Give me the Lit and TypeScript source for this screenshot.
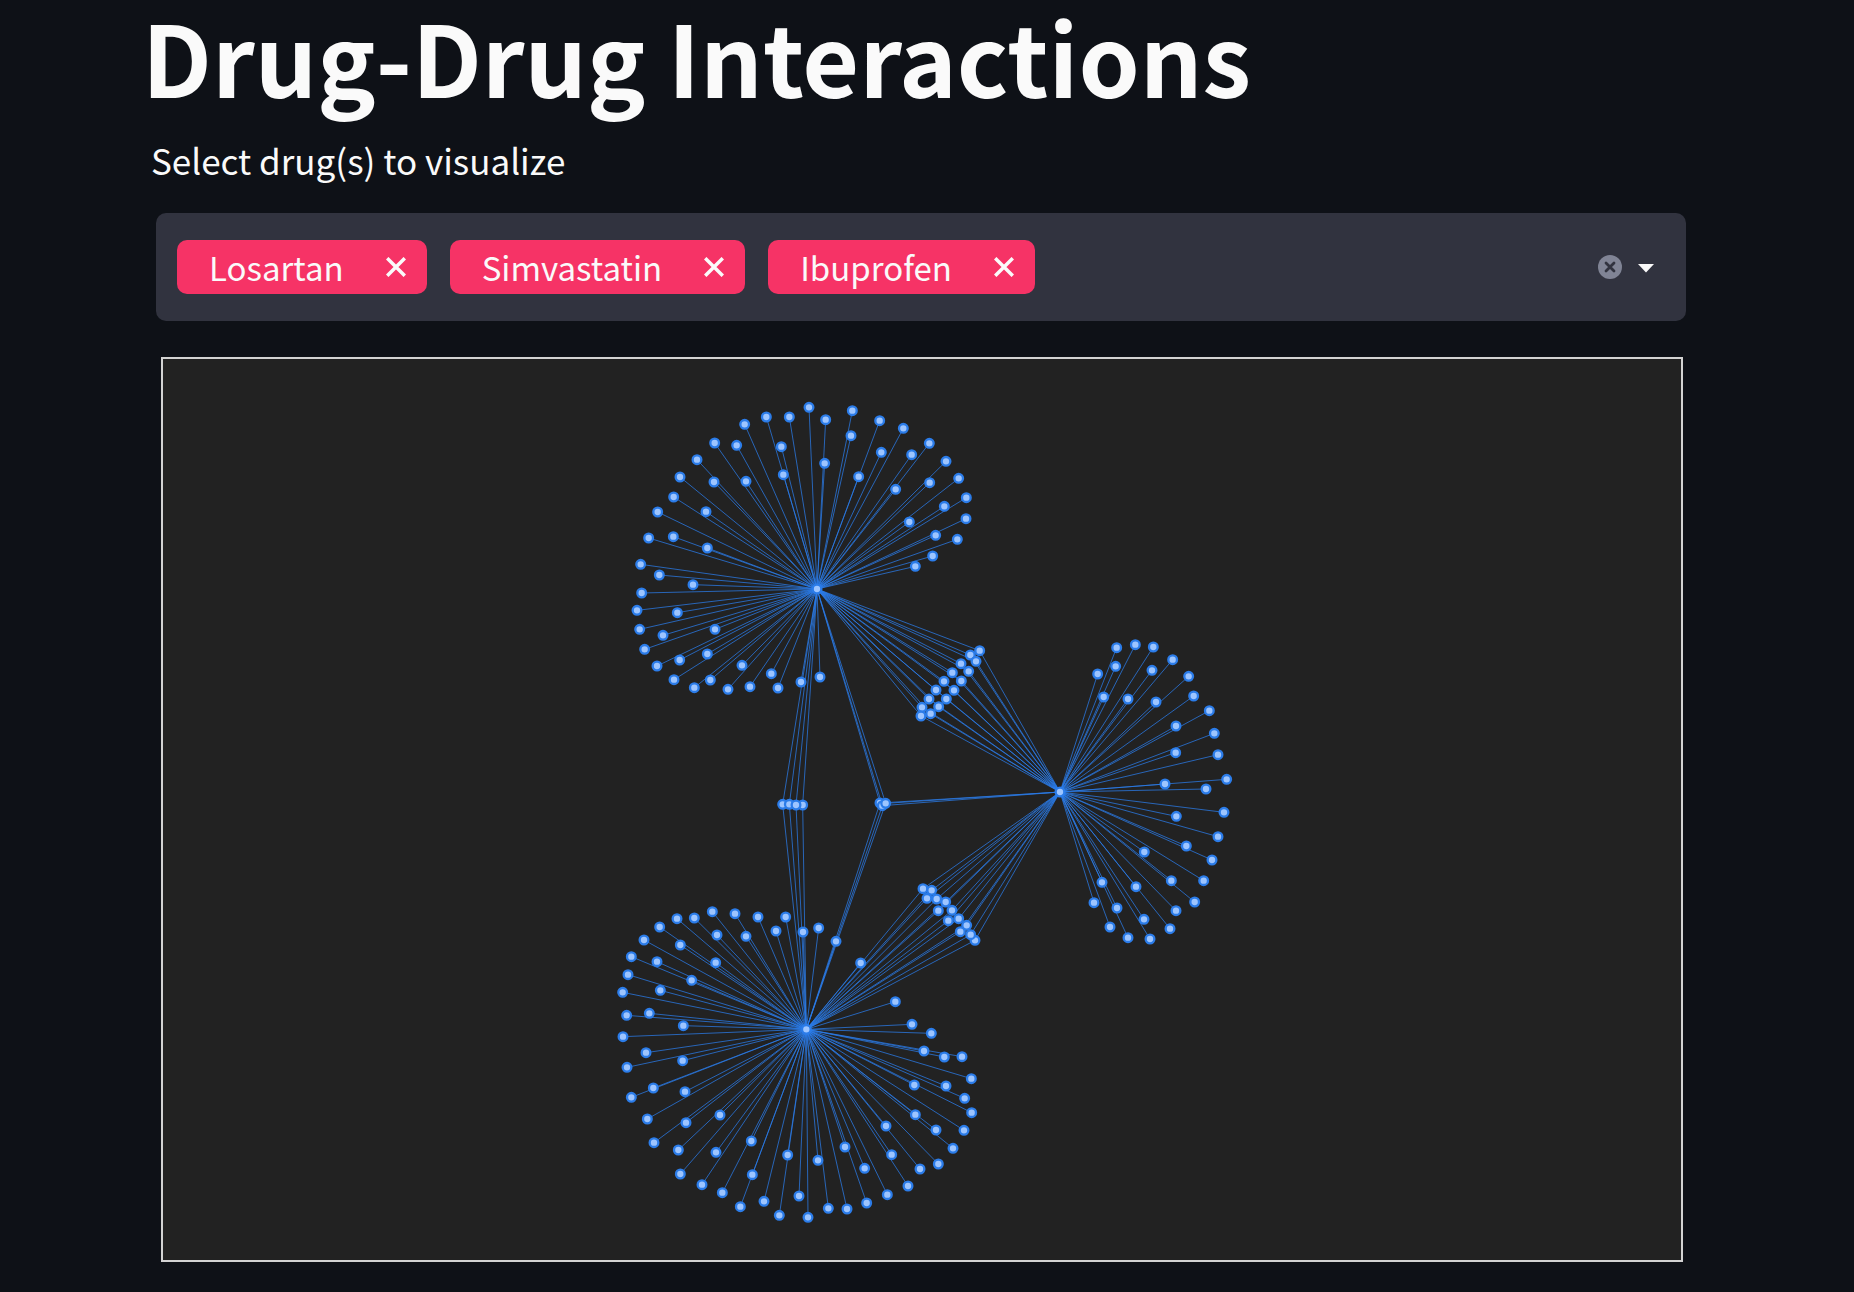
import { LitElement, html, svg, css } from "lit";
import { customElement, property, state } from "lit/decorators.js";

type Point = [number, number];

interface Cluster {
  hubs: string[];
  origin: Point;
  nodes: Point[];
}

const VIEW_WIDTH = 4554;
const VIEW_HEIGHT = 2703;

const HUBS: Record<string, Point> = {
  Losartan: [1962, 690],
  Simvastatin: [1930, 2011],
  Ibuprofen: [2691, 1299],
};

/* Interaction partners, grouped by the selected drugs they are linked to. */
const CLUSTERS: Cluster[] = [
  {
    hubs: ["Losartan"],
    origin: [1371, 93],
    nodes: [
      [567, 52], [439, 81], [508, 81], [374, 103], [284, 159], [350, 166], [484, 170],
      [231, 209], [490, 254], [180, 261], [282, 276], [378, 274], [161, 321], [258, 365],
      [113, 366], [86, 444], [160, 440], [262, 474], [62, 523], [118, 555], [219, 584],
      [65, 609], [51, 661], [172, 668], [59, 718], [129, 736], [285, 718], [74, 778],
      [262, 792], [179, 810], [111, 828], [366, 826], [162, 869], [271, 870], [454, 851],
      [223, 893], [324, 898], [390, 890], [474, 894], [543, 876], [600, 861],
    ],
  },
  {
    hubs: ["Losartan"],
    origin: [1911, 93],
    nodes: [
      [77, 89], [157, 62], [153, 137], [239, 92], [310, 115], [388, 160], [74, 220],
      [244, 187], [335, 194], [438, 214], [176, 260], [287, 298], [389, 278], [476, 265],
      [499, 323], [433, 349], [328, 396], [498, 386], [407, 436], [472, 448], [398, 498],
      [346, 529],
    ],
  },
  {
    hubs: ["Losartan", "Ibuprofen"],
    origin: [1821, 813],
    nodes: [
      [601, 75], [629, 62], [573, 101], [618, 94], [547, 128], [596, 124], [522, 154],
      [574, 153], [498, 180], [552, 181], [477, 207], [529, 207], [456, 232], [506, 230],
      [482, 251], [453, 258],
    ],
  },
  {
    hubs: ["Losartan", "Simvastatin"],
    origin: [1821, 813],
    nodes: [[98, 525], [38, 523], [58, 523], [78, 525]],
  },
  {
    hubs: ["Losartan", "Simvastatin", "Ibuprofen"],
    origin: [1821, 813],
    nodes: [[330, 519], [337, 527], [347, 520]],
  },
  {
    hubs: ["Simvastatin", "Ibuprofen"],
    origin: [1821, 813],
    nodes: [
      [459, 776], [485, 781], [471, 805], [500, 807], [527, 816], [505, 842], [546, 841],
      [535, 872], [566, 866], [590, 886], [571, 905], [615, 931], [602, 914],
    ],
  },
  {
    hubs: ["Simvastatin"],
    origin: [1821, 813],
    nodes: [[198, 934], [272, 999], [146, 894], [99, 906]],
  },
  {
    hubs: ["Ibuprofen"],
    origin: [2631, 813],
    nodes: [
      [230, 53], [286, 44], [340, 51], [398, 89], [173, 132], [227, 109], [336, 121],
      [446, 139], [191, 201], [264, 207], [348, 216], [461, 198], [508, 242], [408, 288],
      [523, 310], [407, 368], [534, 374], [560, 448], [375, 462], [498, 477], [552, 547],
      [409, 559], [534, 620], [439, 648], [313, 666], [516, 690], [186, 757], [288, 770],
      [394, 752], [491, 752], [162, 818], [231, 834], [464, 816], [408, 842], [312, 868],
      [210, 891], [264, 923], [330, 927], [390, 896],
    ],
  },
  {
    hubs: ["Simvastatin"],
    origin: [1341, 1593],
    nodes: [
      [307, 65], [375, 71], [444, 81], [527, 81], [253, 84], [201, 86], [149, 111],
      [102, 150], [321, 135], [408, 139], [498, 123], [211, 165], [64, 200], [141, 215],
      [317, 218], [54, 254], [245, 271], [38, 307], [151, 301], [50, 376], [118, 370],
      [220, 407], [39, 440], [108, 488], [218, 512], [51, 532], [130, 594], [225, 605],
      [64, 622], [112, 687], [228, 698], [330, 675], [132, 758], [205, 780], [318, 787],
      [424, 753], [211, 852], [276, 884], [427, 854], [533, 795], [337, 908], [391, 950],
      [462, 934], [567, 918], [508, 976], [594, 982],
    ],
  },
  {
    hubs: ["Simvastatin"],
    origin: [1911, 1593],
    nodes: [
      [286, 335], [336, 403], [394, 430], [372, 483], [433, 501], [486, 500], [514, 566],
      [343, 585], [438, 588], [494, 625], [515, 668], [346, 674], [258, 708], [408, 720],
      [492, 721], [459, 775], [135, 771], [275, 794], [54, 811], [194, 835], [415, 822],
      [360, 837], [324, 888], [262, 914], [200, 939], [85, 955], [141, 957],
    ],
  },
];

@customElement("interaction-graph")
class InteractionGraph extends LitElement {
  @property({ attribute: false }) drugs: string[] = [];

  static styles = css`
    :host {
      display: block;
      background: #222222;
      border: 2px solid #d3d3d3;
    }
    .canvas {
      display: block;
      width: 100%;
      height: auto;
    }
    .edge {
      stroke: #2b7ce9;
      stroke-width: 3;
      stroke-opacity: 0.75;
    }
    .node {
      fill: #9dc5ff;
      stroke: #2b7ce9;
      stroke-width: 7;
    }
  `;

  render() {
    const edges: [Point, Point][] = [];
    const nodes: Point[] = [];
    for (const cluster of CLUSTERS) {
      const linked = cluster.hubs.filter((hub) => this.drugs.includes(hub));
      if (!linked.length) continue;
      for (const [x, y] of cluster.nodes) {
        const node: Point = [cluster.origin[0] + x, cluster.origin[1] + y];
        nodes.push(node);
        for (const hub of linked) edges.push([HUBS[hub], node]);
      }
    }
    for (const drug of this.drugs) nodes.push(HUBS[drug]);

    return html`
      <svg class="canvas" viewBox="0 0 ${VIEW_WIDTH} ${VIEW_HEIGHT}" role="img" aria-label="Interaction graph">
        ${edges.map(
          ([a, b]) => svg`<line class="edge" x1=${a[0]} y1=${a[1]} x2=${b[0]} y2=${b[1]}></line>`,
        )}
        ${nodes.map(([x, y]) => svg`<circle class="node" cx=${x} cy=${y} r="13"></circle>`)}
      </svg>
    `;
  }
}

@customElement("drug-select")
class DrugSelect extends LitElement {
  @property({ attribute: false }) drugs: string[] = [];

  static styles = css`
    :host {
      display: block;
    }
    .label {
      display: block;
      margin: 0 0 31px 9px;
      font-size: 35px;
      line-height: 44px;
    }
    .field {
      display: flex;
      align-items: center;
      gap: 16px;
      min-height: 108px;
      box-sizing: border-box;
      margin-left: 14px;
      padding: 20px 32px 20px 21px;
      border-radius: 10px;
      background: #31333f;
    }
    .tags {
      display: flex;
      flex: 1;
      flex-wrap: wrap;
      gap: 23px;
      min-width: 0;
    }
    .tag {
      display: flex;
      align-items: center;
      gap: 42px;
      height: 54px;
      padding: 0 21px 0 32px;
      border-radius: 10px;
      background: #f63366;
      font-size: 33px;
      line-height: 52px;
    }
    .search {
      flex: 1;
      min-width: 40px;
      height: 54px;
      padding: 0;
      border: 0;
      outline: 0;
      background: transparent;
      color: inherit;
      font: inherit;
      font-size: 33px;
    }
    button {
      display: flex;
      padding: 0;
      border: 0;
      background: none;
      color: inherit;
      cursor: pointer;
    }
    svg {
      display: block;
    }
  `;

  private changeDrugs(drugs: string[]) {
    this.dispatchEvent(new CustomEvent("drugs-change", { detail: drugs }));
  }

  render() {
    return html`
      <label class="label" for="search">Select drug(s) to visualize</label>
      <div class="field">
        <div class="tags">
          ${this.drugs.map(
            (drug) => html`
              <span class="tag">
                ${drug}
                <button
                  type="button"
                  aria-label="Remove ${drug}"
                  @click=${() => this.changeDrugs(this.drugs.filter((d) => d !== drug))}
                >
                  <svg width="20" height="20" viewBox="0 0 20 20">
                    <path d="M1.200 1.200L18.800 18.800M18.800 1.200L1.200 18.800" stroke="currentColor" stroke-width="3.500" />
                  </svg>
                </button>
              </span>
            `,
          )}
          <input class="search" id="search" type="text" autocomplete="off" />
        </div>
        <button type="button" aria-label="Clear all" @click=${() => this.changeDrugs([])}>
          <svg width="24" height="24" viewBox="0 0 24 24">
            <circle cx="12" cy="12" r="12" fill="#808495" />
            <path d="M8 8L16 16M16 8L8 16" stroke="#31333f" stroke-width="2.800" stroke-linecap="round" />
          </svg>
        </button>
        <button type="button" aria-label="Open">
          <svg width="16" height="24" viewBox="0 0 16 24">
            <path d="M0 9H16L8 17.500Z" fill="#fafafa" />
          </svg>
        </button>
      </div>
    `;
  }
}

@customElement("app-root")
class AppRoot extends LitElement {
  @state() private drugs = ["Losartan", "Simvastatin", "Ibuprofen"];

  static styles = css`
    :host {
      display: block;
      box-sizing: border-box;
      min-height: 100vh;
      padding: 0 168px 28px 142px;
      background: #0e1117;
      color: #fafafa;
      font-family: "Noto Sans CJK SC", "Open Sans", sans-serif;
    }
    .title {
      margin: 0 0 28px;
      font-size: 98px;
      font-weight: 700;
      line-height: 110px;
    }
    .graph {
      margin: 36px 3px 0 19px;
    }
  `;

  render() {
    return html`
      <main>
        <h1 class="title">Drug-Drug Interactions</h1>
        <drug-select
          .drugs=${this.drugs}
          @drugs-change=${(e: CustomEvent<string[]>) => (this.drugs = e.detail)}
        ></drug-select>
        <interaction-graph class="graph" .drugs=${this.drugs}></interaction-graph>
      </main>
    `;
  }
}
